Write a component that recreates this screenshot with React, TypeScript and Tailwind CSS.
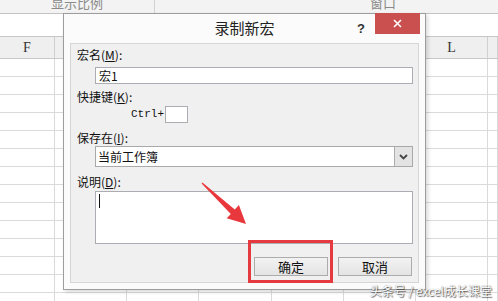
const cols = ['F', 'G', 'H', 'I', 'J', 'K', 'L', '']
const widths = ['w-[55px]', 'w-[72px]', 'w-[72px]', 'w-[73px]', 'w-[72px]', 'w-[72px]', 'w-[72px]', 'flex-1']
const rows = Array.from({ length: 14 })

const cjk = "font-['Noto_Sans_CJK_SC',sans-serif]"

function Label({ text, k }: { text: string; k: string }) {
  return (
    <div className={`mt-[6px] h-[14px] pl-[6px] text-[12px] leading-[14px] text-[#111] ${cjk}`}>
      {text}(<span className="underline">{k}</span>):
    </div>
  )
}

function Sheet() {
  return (
    <div className="flex h-[301px] w-[498px] flex-col overflow-hidden bg-white">
      {/* ribbon */}
      <div className={`flex h-[14px] shrink-0 border-b border-[#c3c3c3] bg-[#f3f3f3] text-[13px] leading-[13px] text-[#8a8a8a] ${cjk}`}>
        <div className="flex w-[155px] justify-center border-r border-[#d2d2d2]">
          <span className="-translate-y-[4px]">显示比例</span>
        </div>
        <div className="flex-1 pl-[215px]">
          <span className="block -translate-y-[4px]">窗口</span>
        </div>
      </div>
      {/* formula bar */}
      <div className="h-[23px] shrink-0 border-b border-[#c6c6c6] bg-white" />
      {/* column header */}
      <div className="flex h-[22px] shrink-0 border-b border-[#c9c9c9] bg-[#efefef]">
        {cols.map((c, i) => (
          <div
            key={i}
            className={`${widths[i]} flex items-center justify-center border-r border-[#d0d0d0] font-['Liberation_Serif',serif] text-[14px] text-[#333]`}
          >
            {c}
          </div>
        ))}
      </div>
      {rows.map((_, r) => (
        <div key={r} className="flex h-[18px] shrink-0 border-b border-[#dadada]">
          {cols.map((_c, i) => (
            <div key={i} className={`${widths[i]} border-r border-[#dadada]`} />
          ))}
        </div>
      ))}
    </div>
  )
}

function Dialog() {
  return (
    <div className="absolute left-[63px] top-[13px] flex h-[277px] w-[363px] flex-col border border-[#9d9d9d] bg-[#fbfbfb] shadow-[2px_2px_4px_rgba(0,0,0,0.15)]">
      <div className="relative flex h-[29px] shrink-0 items-center justify-center">
        <span className={`text-[15px] text-[#222] ${cjk}`}>录制新宏</span>
        <span className="absolute left-[293px] top-[5px] font-['Liberation_Sans',sans-serif] text-[13px] font-bold text-[#333]">?</span>
        <div className="absolute -top-px right-[5px] flex h-[21px] w-[45px] items-center justify-center bg-[#c9504e]">
          <svg width="9" height="9" viewBox="0 0 9 9">
            <path d="M1 1L8 8M8 1L1 8" stroke="white" strokeWidth="1.6" />
          </svg>
        </div>
      </div>
      <div className="mx-[6px] flex h-[240px] flex-col border border-[#d6d6d6] bg-[#f0f0f0]">
        <div className="-mt-[2px]">
          <Label text="宏名" k="M" />
        </div>
        <div className={`ml-[24px] mr-[5px] mt-[5px] flex h-[17px] items-center border border-[#abadb3] bg-white pl-[3px] text-[12px] text-[#111] ${cjk}`}>
          宏1
        </div>
        <Label text="快捷键" k="K" />
        <div className="mt-[2px] flex items-center pl-[60px]">
          <span className="font-['Liberation_Mono',monospace] text-[11px] text-[#111]">Ctrl+</span>
          <div className="ml-[1px] h-[17px] w-[23px] border border-[#abadb3] bg-white" />
        </div>
        <div className="mt-[2px]">
          <Label text="保存在" k="I" />
        </div>
        <div className={`ml-[24px] mr-[5px] mt-[1px] flex h-[21px] items-center border border-[#a9a9a9] bg-white text-[12px] text-[#111] ${cjk}`}>
          <span className="flex-1 pl-[2px]">当前工作簿</span>
          <div className="flex h-full w-[18px] items-center justify-center border-l border-[#acacac] bg-[#e3e3e3]">
            <svg width="9" height="6" viewBox="0 0 9 6">
              <path d="M1 1L4.5 4.5L8 1" stroke="#444" strokeWidth="1.8" fill="none" />
            </svg>
          </div>
        </div>
        <div className="mt-[2px]">
          <Label text="说明" k="D" />
        </div>
        <div className="ml-[24px] mr-[5px] mt-[2px] h-[53px] border border-[#abadb3] bg-white pl-[3px] pt-[2px]">
          <div className="h-[14px] w-px bg-[#111]" />
        </div>
        <div className={`mr-[6px] mt-[13px] flex justify-end gap-[10px] text-[13px] text-[#111] ${cjk}`}>
          <div className="flex h-[19px] w-[74px] items-center justify-center border border-[#acacac] bg-gradient-to-b from-[#f2f2f2] to-[#e4e4e4]">确定</div>
          <div className="flex h-[19px] w-[74px] items-center justify-center border border-[#acacac] bg-gradient-to-b from-[#f2f2f2] to-[#e4e4e4]">取消</div>
        </div>
      </div>
    </div>
  )
}

export default function App() {
  return (
    <div className="relative h-[301px] w-[498px] overflow-hidden">
      <Sheet />
      <Dialog />
      {/* highlight */}
      <div className="absolute left-[248px] top-[240px] h-[43px] w-[85px] border-[3px] border-[#e53a3f]" />
      <svg className="absolute left-0 top-0" width="498" height="301" viewBox="0 0 498 301">
        <polygon
          points="201.6,183.4 202.4,182.6 234.8,209.5 238.9,205.1 246,224 226.7,218.3 230.8,213.9"
          fill="#e8383d"
        />
      </svg>
      <div
        className={`absolute right-[6px] top-[283px] text-[12px] leading-[15px] text-white ${cjk}`}
        style={{ textShadow: '1px 1px 1px rgba(0,0,0,0.6), 0 0 1px rgba(0,0,0,0.5)' }}
      >
        头条号 / excel成长课堂
      </div>
    </div>
  )
}
